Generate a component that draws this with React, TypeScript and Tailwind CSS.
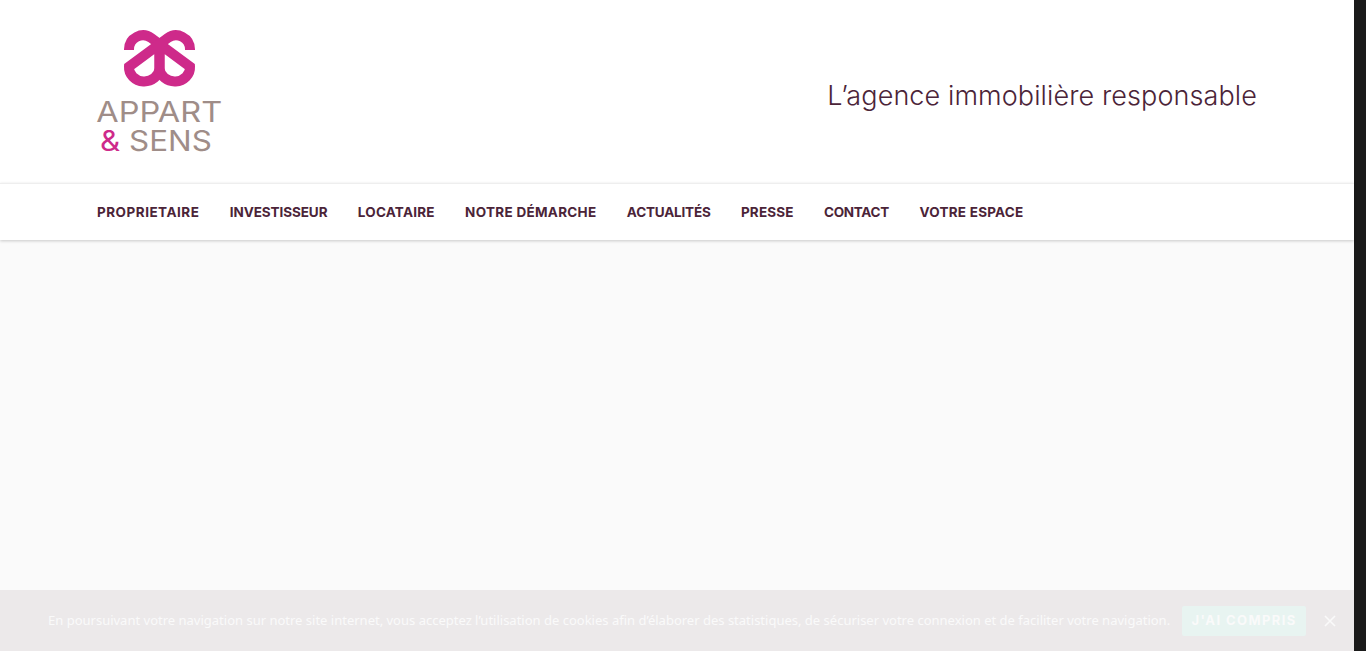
const navItems = [
  { label: "PROPRIETAIRE", spacing: "tracking-[0.5px]" },
  { label: "INVESTISSEUR", spacing: "tracking-[-0.08px]" },
  { label: "LOCATAIRE", spacing: "tracking-[0.22px]" },
  { label: "NOTRE DÉMARCHE", spacing: "tracking-[0.29px]" },
  { label: "ACTUALITÉS", spacing: "tracking-[-0.2px]" },
  { label: "PRESSE", spacing: "tracking-[0.17px]" },
  { label: "CONTACT", spacing: "tracking-[-0.29px]" },
  { label: "VOTRE ESPACE", spacing: "tracking-[0.25px]" },
];

function LogoMark() {
  return (
    <svg width="80" height="66" viewBox="0 0 240 198" fill="none" className="block">
      <g stroke="#ce2a8a" strokeWidth="30" strokeMiterlimit="4">
        <path d="M30 72 V70 A42 42 0 0 1 96.8 36.1 L213 122 A45.75 42 0 0 1 121.5 127 V60" />
        <path d="M213 72 V70 A42 42 0 0 0 146.2 36.1 L30 122 A45.75 42 0 0 0 121.5 127 V60" />
      </g>
    </svg>
  );
}

function Logo() {
  return (
    <div className="flex flex-col items-center w-[124px] pb-[1px] font-['Inter',sans-serif] text-[#9f8d88]">
      <LogoMark />
      <div className="mt-[6px] text-[28px] leading-[29px] whitespace-nowrap scale-x-[1.16]">APPART</div>
      <div className="mr-[6px] text-[28px] leading-[29px] whitespace-nowrap scale-x-[1.12]">
        <span className="text-[#ce2a8a]">&amp;</span> SENS
      </div>
    </div>
  );
}

export default function App() {
  return (
    <div className="flex h-[651px] overflow-hidden bg-[#1a1a1a]">
      <div className="relative flex flex-col w-[1354px] bg-[#fafafa]">
        <header className="bg-white">
          <div className="flex items-center justify-between h-[183px] px-[97px]">
            <Logo />
            <p className="mt-[10px] font-['Inter',sans-serif] text-[27px] font-light tracking-[0.1px] text-[#4b2438]">L’agence immobilière responsable</p>
          </div>
          <nav className="flex h-[57px] items-center gap-[30.4px] pl-[97px] border-t border-[#eeeeee] shadow-[0_1px_3px_rgba(0,0,0,0.2)] font-['Inter',sans-serif] text-[13.5px] font-bold text-[#4b2438]">
            {navItems.map((item) => (
              <a key={item.label} className={item.spacing}>{item.label}</a>
            ))}
          </nav>
        </header>
        <div className="absolute bottom-0 left-0 right-0 flex h-[61px] items-center bg-[#ece9ea] pl-[48px]">
          <span className="font-['Noto_Sans',sans-serif] text-[13px] text-[#fafafa] whitespace-nowrap">
            En poursuivant votre navigation sur notre site internet, vous acceptez l’utilisation de cookies afin d’élaborer des statistiques, de sécuriser votre connexion et de faciliter votre navigation.
          </span>
          <button className="ml-[12px] h-[30px] w-[124px] shrink-0 rounded-[2px] bg-[#e8f4f1] font-['Inter',sans-serif] text-[13px] font-bold tracking-[1.4px] whitespace-nowrap text-[#fafafa]">J'AI COMPRIS</button>
          <span className="ml-[18px] shrink-0 text-[#fafafa]">
            <svg width="12" height="12" viewBox="0 0 12 12" stroke="currentColor" strokeWidth="1.6" className="block"><path d="M1 1l10 10M11 1L1 11" /></svg>
          </span>
        </div>
      </div>
    </div>
  );
}
